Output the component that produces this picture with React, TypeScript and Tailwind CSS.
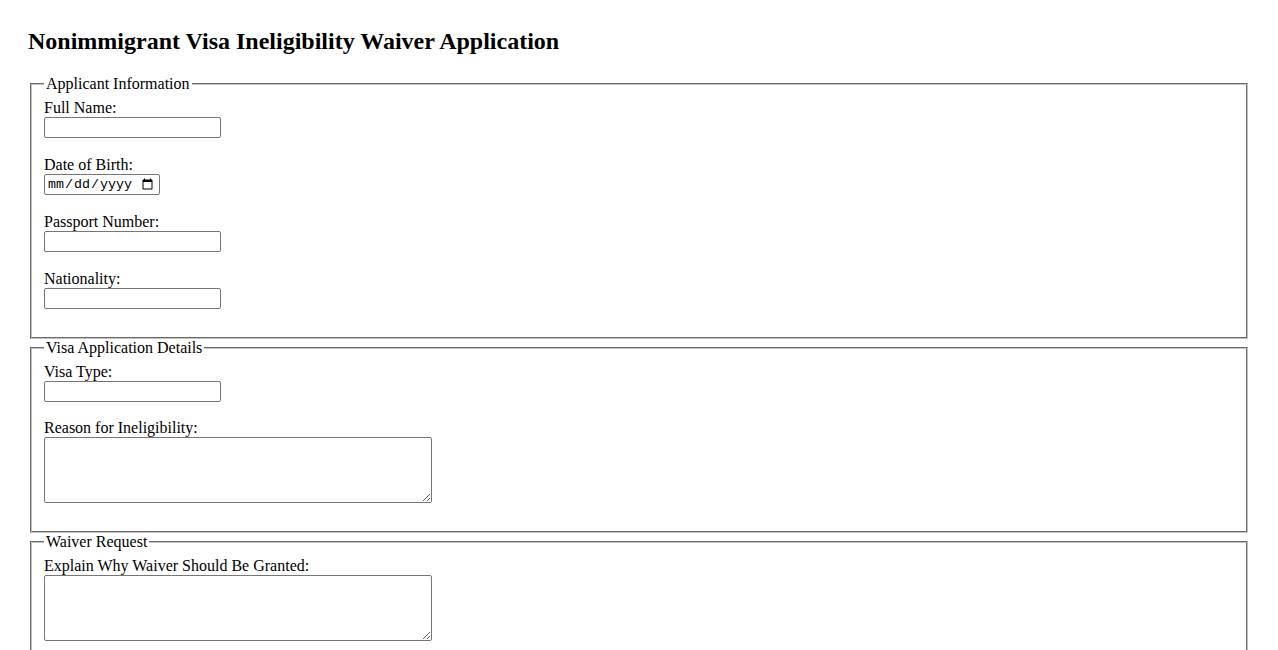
import React from "react";

const serif = "font-['Liberation_Serif','Times_New_Roman',serif]";

function TextField({ label, id, last }: { label: string; id: string; last?: boolean }) {
  return (
    <div className={last ? "mb-[16.6px]" : "mb-[17.6px]"}>
      <label htmlFor={id} className="block leading-[18.4px]">
        {label}
      </label>
      <input
        id={id}
        type="text"
        className="block w-[177px] h-[21px] border border-[#767676] rounded-[2px] px-[2px] text-[13.33px] font-['Liberation_Sans',Arial,sans-serif] bg-white"
      />
    </div>
  );
}

function AreaField({ label, id }: { label: string; id: string }) {
  return (
    <div className="mb-[17.6px]">
      <label htmlFor={id} className="block leading-[18.4px]">
        {label}
      </label>
      <textarea
        id={id}
        className="block w-[388px] h-[66px] border border-[#767676] rounded-[2px] p-[2px] text-[13.33px] font-['Liberation_Mono',monospace] bg-white"
      />
    </div>
  );
}

function Section({ title, children }: { title: string; children: React.ReactNode }) {
  return (
    <fieldset className="mx-[2px] border-2 [border-style:groove] border-[#c0c0c0] pt-[5.6px] px-[12px] pb-[10px] min-w-0">
      <legend className="px-[2px] leading-[18.4px]">{title}</legend>
      {children}
    </fieldset>
  );
}

export default function App() {
  return (
    <div className={`${serif} text-[16px] text-black bg-white min-h-screen pt-[28px] px-[28px]`}>
      <h1 className="text-[24px] font-bold leading-[27.6px] mb-[19px]">
        Nonimmigrant Visa Ineligibility Waiver Application
      </h1>
      <form>
        <Section title="Applicant Information">
          <TextField label="Full Name:" id="fullName" />
          <div className="mb-[17.6px]">
            <label htmlFor="dob" className="block leading-[18.4px]">
              Date of Birth:
            </label>
            <input
              id="dob"
              type="date"
              className="block w-[116px] h-[21px] border border-[#767676] rounded-[2px] pl-[2px] pr-[3px] text-[13.33px] font-['Liberation_Mono','DejaVu_Sans_Mono',monospace] bg-white"
            />
          </div>
          <TextField label="Passport Number:" id="passport" />
          <TextField label="Nationality:" id="nationality" />
        </Section>
        <Section title="Visa Application Details">
          <TextField label="Visa Type:" id="visaType" last />
          <AreaField label="Reason for Ineligibility:" id="reason" />
        </Section>
        <Section title="Waiver Request">
          <AreaField label="Explain Why Waiver Should Be Granted:" id="explain" />
        </Section>
      </form>
    </div>
  );
}
